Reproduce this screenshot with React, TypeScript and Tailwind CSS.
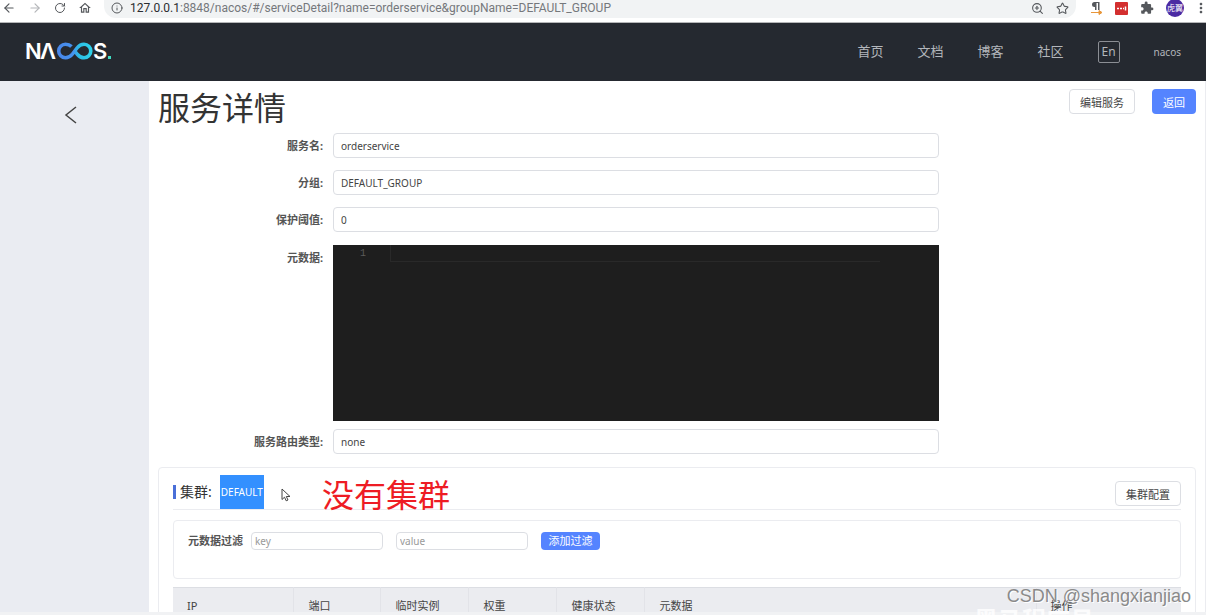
import React, { useState } from 'react';
import { ArrowLeft, ArrowRight, Info, RotateCw, Star, ZoomIn } from 'lucide-react';
import { MdExtension, MdMoreVert, MdOutlineHome } from 'react-icons/md';

interface FieldProps {
  id: string;
  label: string;
  value: string;
  onChange: (value: string) => void;
}

const navLinks = ['首页', '文档', '博客', '社区'];

const columns = [
  { title: 'IP', width: 'w-[12%]' },
  { title: '端口', width: 'w-[87px]' },
  { title: '临时实例', width: 'w-[88px]' },
  { title: '权重', width: 'w-[88px]' },
  { title: '健康状态', width: 'w-[88px]' },
  { title: '元数据', width: '' },
  { title: '操作', width: 'w-[145px]' },
];

const outlineButton =
  'h-[25px] w-[66px] rounded-sm border border-[#dcdee3] bg-white pt-0.5 text-[11px] leading-5 text-[#444] hover:bg-gray-50';

const Logo = () => (
  <svg width="88" height="40" viewBox="0 -8 88 40" role="img" aria-label="NACOS.">
    <defs>
      <linearGradient id="loop" x1="33" x2="69" y1="0" y2="0" gradientUnits="userSpaceOnUse">
        <stop offset="0" stopColor="#4a86e8" />
        <stop offset="0.42" stopColor="#4593f0" />
        <stop offset="0.58" stopColor="#2cbde6" />
        <stop offset="1" stopColor="#2fd6ea" />
      </linearGradient>
    </defs>
    <g fill="#fff" fontFamily="Inter, sans-serif" fontSize="22" fontWeight="600">
      <text x="0" y="19">N</text>
      <text x="15" y="19">Λ</text>
      <text x="68" y="19">S</text>
    </g>
    <path
      d="M46.500 6.500C45 5 43 4.200 40.500 4.200A6.800 6.800 0 0 0 40.500 17.800C43.500 17.800 45.500 16.500 47.500 14L52 8C54 5.500 56.500 4.200 59 4.200A6.800 6.800 0 0 1 59 17.800C56.500 17.800 54.500 16.800 52.500 14.500L50.500 12"
      fill="none"
      stroke="url(#loop)"
      strokeWidth="3.600"
    />
    <rect x="83" y="16" width="3" height="3" fill="#3fe0c5" />
  </svg>
);

const BrowserBar = () => (
  <div className="flex h-[23px] shrink-0 items-start overflow-hidden border-b border-[#b5b6b8] bg-white text-[#55585c]">
    <div className="flex h-4 items-center gap-3 pl-0.5">
      <button aria-label="Back"><ArrowLeft size={14} /></button>
      <button aria-label="Forward" className="text-[#b4b6b9]"><ArrowRight size={14} /></button>
      <button aria-label="Reload"><RotateCw size={12} /></button>
      <button aria-label="Home"><MdOutlineHome size={14} /></button>
    </div>
    <div className="ml-3 flex h-[18px] flex-1 items-start rounded-b-xl bg-[#f1f3f4] px-[7px]">
      <div className="flex h-4 flex-1 items-center gap-[7px]">
        <Info size={12} />
        <span className="font-[Roboto,sans-serif] text-xs text-[#75787c]">
          <span className="text-[#2b2d30]">127.0.0.1</span>
          :8848/nacos/#/serviceDetail?name=orderservice&amp;groupName=DEFAULT_GROUP
        </span>
      </div>
      <div className="flex h-4 items-center gap-3">
        <button aria-label="Zoom"><ZoomIn size={13} /></button>
        <button aria-label="Bookmark"><Star size={13} /></button>
      </div>
    </div>
    <div className="-mr-[3px] flex h-4 items-center gap-3 pl-[14px]">
      <svg width="13" height="14" viewBox="0 0 13 14" aria-hidden="true">
        <path d="M9.500 1H4.500a2.500 2.500 0 0 0 0 5H5v3h1.500V2H8v7h1.500z" fill="#55585c" />
        <path d="M1 11.500h9M9 9.500l3 2-3 2z" fill="#e8963a" stroke="#e8963a" />
      </svg>
      <svg width="13" height="13" viewBox="0 0 13 13" aria-hidden="true">
        <rect width="13" height="13" rx="1" fill="#d32f2f" />
        <path d="M2 6.500h2M5 6.500h2M8 6.500h1M10.500 4.500v4" stroke="#fff" strokeWidth="1.500" />
      </svg>
      <MdExtension size={14} />
      <span className="flex size-[18px] items-center justify-center rounded-full bg-[#4b2aa3] text-[8px] text-white">
        虎翼
      </span>
      <MdMoreVert size={16} className="-ml-[3px]" />
    </div>
  </div>
);

const Header = () => (
  <header className="flex h-[58px] shrink-0 items-center justify-between bg-[#252930] px-[25px] text-[#b3b6bb]">
    <a href="#/"><Logo /></a>
    <nav className="flex items-center gap-[34px] text-[13px]">
      {navLinks.map((link) => (
        <a key={link} href="#/" className="hover:text-white">{link}</a>
      ))}
      <button className="h-[22px] w-[22px] rounded-xs border border-[#8b8e94] text-xs">En</button>
      <a href="#/" className="text-[10px]">nacos</a>
    </nav>
  </header>
);

const Field: React.FC<FieldProps> = ({ id, label, value, onChange }) => (
  <div className="flex items-center">
    <label htmlFor={id} className="w-[175px] pt-0.5 pr-2.5 text-right text-[11px] font-bold text-[#555]">
      {label}:
    </label>
    <input
      id={id}
      value={value}
      onChange={(e) => onChange(e.target.value)}
      className="h-[25px] w-7/12 rounded-sm border border-[#dcdee3] px-[7px] text-[10px] text-[#444] outline-none focus:border-blue-400"
    />
  </div>
);

const Cluster = () => (
  <section className="relative mt-[13px] rounded-sm border border-[#ebecf0] px-3.5">
    <div className="mt-[7px] flex h-[35px] items-center justify-between border-b border-[#ebecf0]">
      <h2 className="flex h-full items-center text-sm text-[#333]">
        <span className="mr-1 h-3.5 w-[3px] bg-[#4a6fd8]" />
        集群:
        <span className="ml-2 flex h-full items-center bg-[#3390ff] px-px text-[10px] text-white">DEFAULT</span>
      </h2>
      <div className="pt-[3px]">
        <button className={outlineButton}>集群配置</button>
      </div>
    </div>

    <form
      className="mt-2.5 flex h-[59px] items-start rounded-sm border border-[#ebecf0] px-3.5 pt-[11px]"
      onSubmit={(e) => e.preventDefault()}
    >
      <label htmlFor="filter-key" className="text-[11px] leading-[18px] font-bold text-[#555]">元数据过滤</label>
      <input
        id="filter-key"
        placeholder="key"
        className="ml-2 h-[18px] w-[132px] rounded-sm border border-[#dcdee3] px-[3px] text-[10px] outline-none placeholder:text-[#999]"
      />
      <input
        aria-label="value"
        placeholder="value"
        className="ml-[13px] h-[18px] w-[132px] rounded-sm border border-[#dcdee3] px-[3px] text-[10px] outline-none placeholder:text-[#999]"
      />
      <button className="ml-[13px] h-[18px] w-[59px] rounded-sm bg-[#5584ff] text-[11px] leading-[18px] text-white">
        添加过滤
      </button>
    </form>

    <table className="mt-2 w-full table-fixed border-t border-[#dcdee3] bg-[#ebecf0] text-left text-[11px] text-[#444]">
      <thead>
        <tr className="h-[37px]">
          {columns.map((col) => (
            <th
              key={col.title}
              className={`border-r border-[#e2e3e8] px-3.5 font-normal last:border-r-0 ${col.width}`}
            >
              {col.title}
            </th>
          ))}
        </tr>
      </thead>
    </table>

    {/* mouse pointer and handwritten note over the card */}
    <svg className="absolute top-5 left-[122px]" width="10" height="14" viewBox="0 0 10 14" aria-hidden="true">
      <path d="M1 1v10.500l2.500-2.300 1.700 3.600 1.800-.8-1.700-3.500H9z" fill="#fff" stroke="#444" />
    </svg>
    <p className="absolute top-[3px] left-[163px] text-[32px] leading-[48px] text-[#ee1c24]">没有集群</p>
  </section>
);

const App = () => {
  const [service, setService] = useState('orderservice');
  const [group, setGroup] = useState('DEFAULT_GROUP');
  const [threshold, setThreshold] = useState('0');
  const [selector, setSelector] = useState('none');
  const [metadata, setMetadata] = useState('');

  return (
    <div className="relative flex h-screen flex-col overflow-hidden bg-white font-['Noto_Sans','Noto_Sans_CJK_SC',sans-serif]">
      <BrowserBar />
      <Header />

      <div className="flex min-h-0 flex-1 overflow-hidden">
        <aside className="w-[149px] shrink-0 bg-[#eaecf2]">
          <button aria-label="返回上一页" className="mt-[25px] ml-16 block text-[#444]">
            <svg width="14" height="18" viewBox="0 0 14 18" fill="none" stroke="currentColor" strokeWidth="1.500">
              <path d="M12 1L2 9l10 8" />
            </svg>
          </button>
        </aside>

        <main className="min-w-0 flex-1 border-r border-[#ebecf0] px-[9px]">
          <div className="flex h-[52px] items-start justify-between">
            <h1 className="text-[32px] leading-[54px] text-[#333]">服务详情</h1>
            <div className="flex gap-[17px] pt-2">
              <button className={outlineButton}>编辑服务</button>
              <button className="h-[25px] w-11 rounded-sm bg-[#5584ff] pt-0.5 text-[11px] leading-5 text-white">
                返回
              </button>
            </div>
          </div>

          <div className="flex flex-col gap-3">
            <Field id="service" label="服务名" value={service} onChange={setService} />
            <Field id="group" label="分组" value={group} onChange={setGroup} />
            <Field id="threshold" label="保护阈值" value={threshold} onChange={setThreshold} />
          </div>
          <div className="mt-[13px] mb-2 flex items-start">
            <label htmlFor="metadata" className="w-[175px] pt-[5px] pr-2.5 text-right text-[11px] font-bold text-[#555]">
              元数据:
            </label>
            <div className="flex h-[176px] w-7/12 items-start bg-[#1e1e1e] pr-[59px]">
              <span className="w-[57px] pr-6 text-right font-['Liberation_Mono',monospace] text-[10px] leading-[18px] text-[#5a5a5a]">
                1
              </span>
              <textarea
                id="metadata"
                rows={1}
                value={metadata}
                onChange={(e) => setMetadata(e.target.value)}
                className="h-[17px] flex-1 resize-none border-b border-l border-[#292929] font-['Liberation_Mono',monospace] text-[10px] text-gray-300 outline-none"
              />
            </div>
          </div>
          <Field id="selector" label="服务路由类型" value={selector} onChange={setSelector} />

          <Cluster />
        </main>
      </div>

      <div className="h-[3px] shrink-0 bg-[#f1f2f4]" />

      {/* watermarks */}
      <p className="absolute right-28 -bottom-5 text-2xl leading-[30px] font-bold text-white/80">黑马程序员</p>
      <p className="absolute right-[15px] bottom-[5px] font-['Liberation_Sans',sans-serif] text-lg leading-7 text-[#8a8a8a] [text-shadow:1px_1px_0_#fff]">
        CSDN @shangxianjiao
      </p>
    </div>
  );
};

export default App;
